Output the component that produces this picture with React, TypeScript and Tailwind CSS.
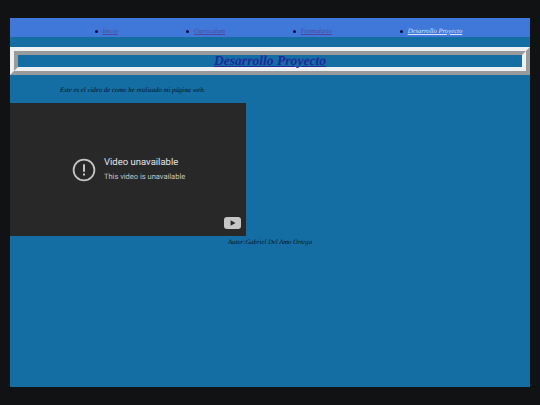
export default function App() {
  const items = [
    { label: "Inicio", w: "w-[91.5px]", color: "text-[#4f479c]" },
    { label: "Curriculum", w: "w-[107px]", color: "text-[#4f479c]" },
    { label: "Formulario", w: "w-[107px]", color: "text-[#4f479c]" },
    { label: "Desarrollo Proyecto", w: "w-[130px]", color: "text-[#dbe5fa]" },
  ];
  return (
    <div className="w-[540px] h-[405px] bg-[#111214] pt-[18px] px-[10px] overflow-hidden font-['Liberation_Serif',serif] [text-rendering:geometricPrecision]">
      <div className="w-[520px] h-[369px] bg-[#156ea3] flex flex-col">
        <ul className="h-[19px] shrink-0 bg-[#3f78d8] flex items-center pt-[7px] pl-[85px]">
          {items.map((it) => (
            <li key={it.label} className={`${it.w} flex items-center`}>
              <span className="w-[3px] h-[3px] rounded-full bg-[#0a0a3c] mr-[4.5px] shrink-0" />
              <a className={`text-[6.7px] leading-[9px] italic underline underline-offset-[0.5px] ${it.color}`}>{it.label}</a>
            </li>
          ))}
        </ul>
        <div className="mt-[10px] h-[28px] shrink-0 border-[4px] border-t-[#eef0f2] border-l-[#eef0f2] border-b-[#999a9c] border-r-[#999a9c]">
          <div className="h-full border-[4px] border-t-[#999a9c] border-l-[#999a9c] border-b-[#eef0f2] border-r-[#eef0f2] flex items-center justify-center">
            <a className="text-[13.6px] leading-[12px] -mt-[1px] font-bold italic underline text-[#20289a]">Desarrollo Proyecto</a>
          </div>
        </div>
        <p className="mt-[11px] pl-[50px] h-[17px] text-[6.8px] leading-[9px] italic text-[#04101f]">
          Este es el video de como he realizado mi página web.
        </p>
        <div className="w-[236px] h-[133px] shrink-0 bg-[#282828] flex flex-col font-['Roboto',sans-serif]">
          <div className="flex items-center pl-[62px] pt-[53px]">
            <svg width="24" height="24" viewBox="0 0 24 24" fill="none" className="shrink-0 mt-[2px]">
              <circle cx="12" cy="12" r="10.4" stroke="#c4c4c4" strokeWidth="1.8" />
              <rect x="11" y="6.3" width="2" height="7.5" fill="#c4c4c4" />
              <rect x="11" y="15.5" width="2" height="2" fill="#c4c4c4" />
            </svg>
            <div className="ml-[8px] flex flex-col">
              <span className="text-[9.5px] leading-[13px] text-[#e4e4e4]">Video unavailable</span>
              <span className="mt-[2px] text-[7.5px] leading-[11px] text-[#c4c4c4]">This video is unavailable</span>
            </div>
          </div>
          <div className="mt-auto mb-[7px] mr-[5px] self-end w-[17px] h-[12px] rounded-[3px] bg-[#c6c6c6] flex items-center justify-center">
            <svg width="6" height="6" viewBox="0 0 5 5"><path d="M0.5 0.3L4.6 2.5L0.5 4.7Z" fill="#282828" /></svg>
          </div>
        </div>
        <p className="mt-[2px] text-center text-[6.7px] leading-[9px] italic text-[#04101f]">
          Autor:Gabriel Del Amo Ortega
        </p>
      </div>
    </div>
  );
}
